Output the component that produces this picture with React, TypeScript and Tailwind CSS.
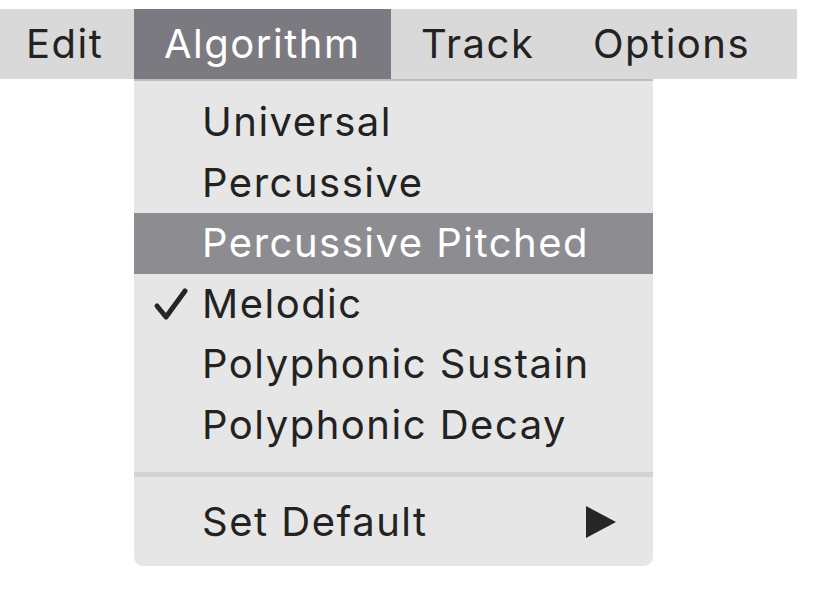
import React from "react";

const items = [
  { label: "Universal" },
  { label: "Percussive" },
  { label: "Percussive Pitched", active: true },
  { label: "Melodic", checked: true },
  { label: "Polyphonic Sustain" },
  { label: "Polyphonic Decay" },
];

function Check() {
  return (
    <svg width="36" height="36" viewBox="0 0 36 36" className="block">
      <path
        d="M4 20 L13 31 L32 5"
        fill="none"
        stroke="#262626"
        strokeWidth="5"
        strokeLinecap="round"
        strokeLinejoin="round"
      />
    </svg>
  );
}

export default function App() {
  return (
    <div
      className="w-[820px] h-[589px] bg-white relative overflow-hidden text-[40px] leading-none tracking-[1.5px] text-[#222222]"
      style={{ fontFamily: "Inter, 'Liberation Sans', Arial, sans-serif" }}
    >
      <div className="h-[9px]" />
      <div className="flex h-[70px] w-[797px] bg-[#d9d9d9]">
        <div className="w-[134px] pl-[26px] flex items-center">Edit</div>
        <div className="w-[257px] pl-[30px] flex items-center bg-[#7b7a80] text-white">Algorithm</div>
        <div className="w-[172px] pl-[30px] flex items-center">Track</div>
        <div className="flex-1 pl-[30px] flex items-center">Options</div>
      </div>
      <div className="ml-[134px] w-[519px] bg-[#e6e6e6] border-t-2 border-[#bdbdbd] rounded-b-[9px] pt-[11px] pb-[14px]">
        {items.map((it) => (
          <div
            key={it.label}
            className={
              "h-[60.5px] flex items-center " +
              (it.active ? "bg-[#8d8c91] text-white" : "")
            }
          >
            <div className="w-[68px] flex justify-end pr-[13px]">
              {it.checked ? <Check /> : null}
            </div>
            <span>{it.label}</span>
          </div>
        ))}
        <div className="mt-[17px] h-[5px] bg-[#d3d3d3]" />
        <div className="mt-[15px] h-[60px] flex items-center">
          <div className="w-[68px]" />
          <span className="flex-1">Set Default</span>
          <svg width="30" height="32" viewBox="0 0 30 32" className="mr-[37px] block">
            <polygon points="0,0 30,16 0,32" fill="#262626" />
          </svg>
        </div>
      </div>
    </div>
  );
}
